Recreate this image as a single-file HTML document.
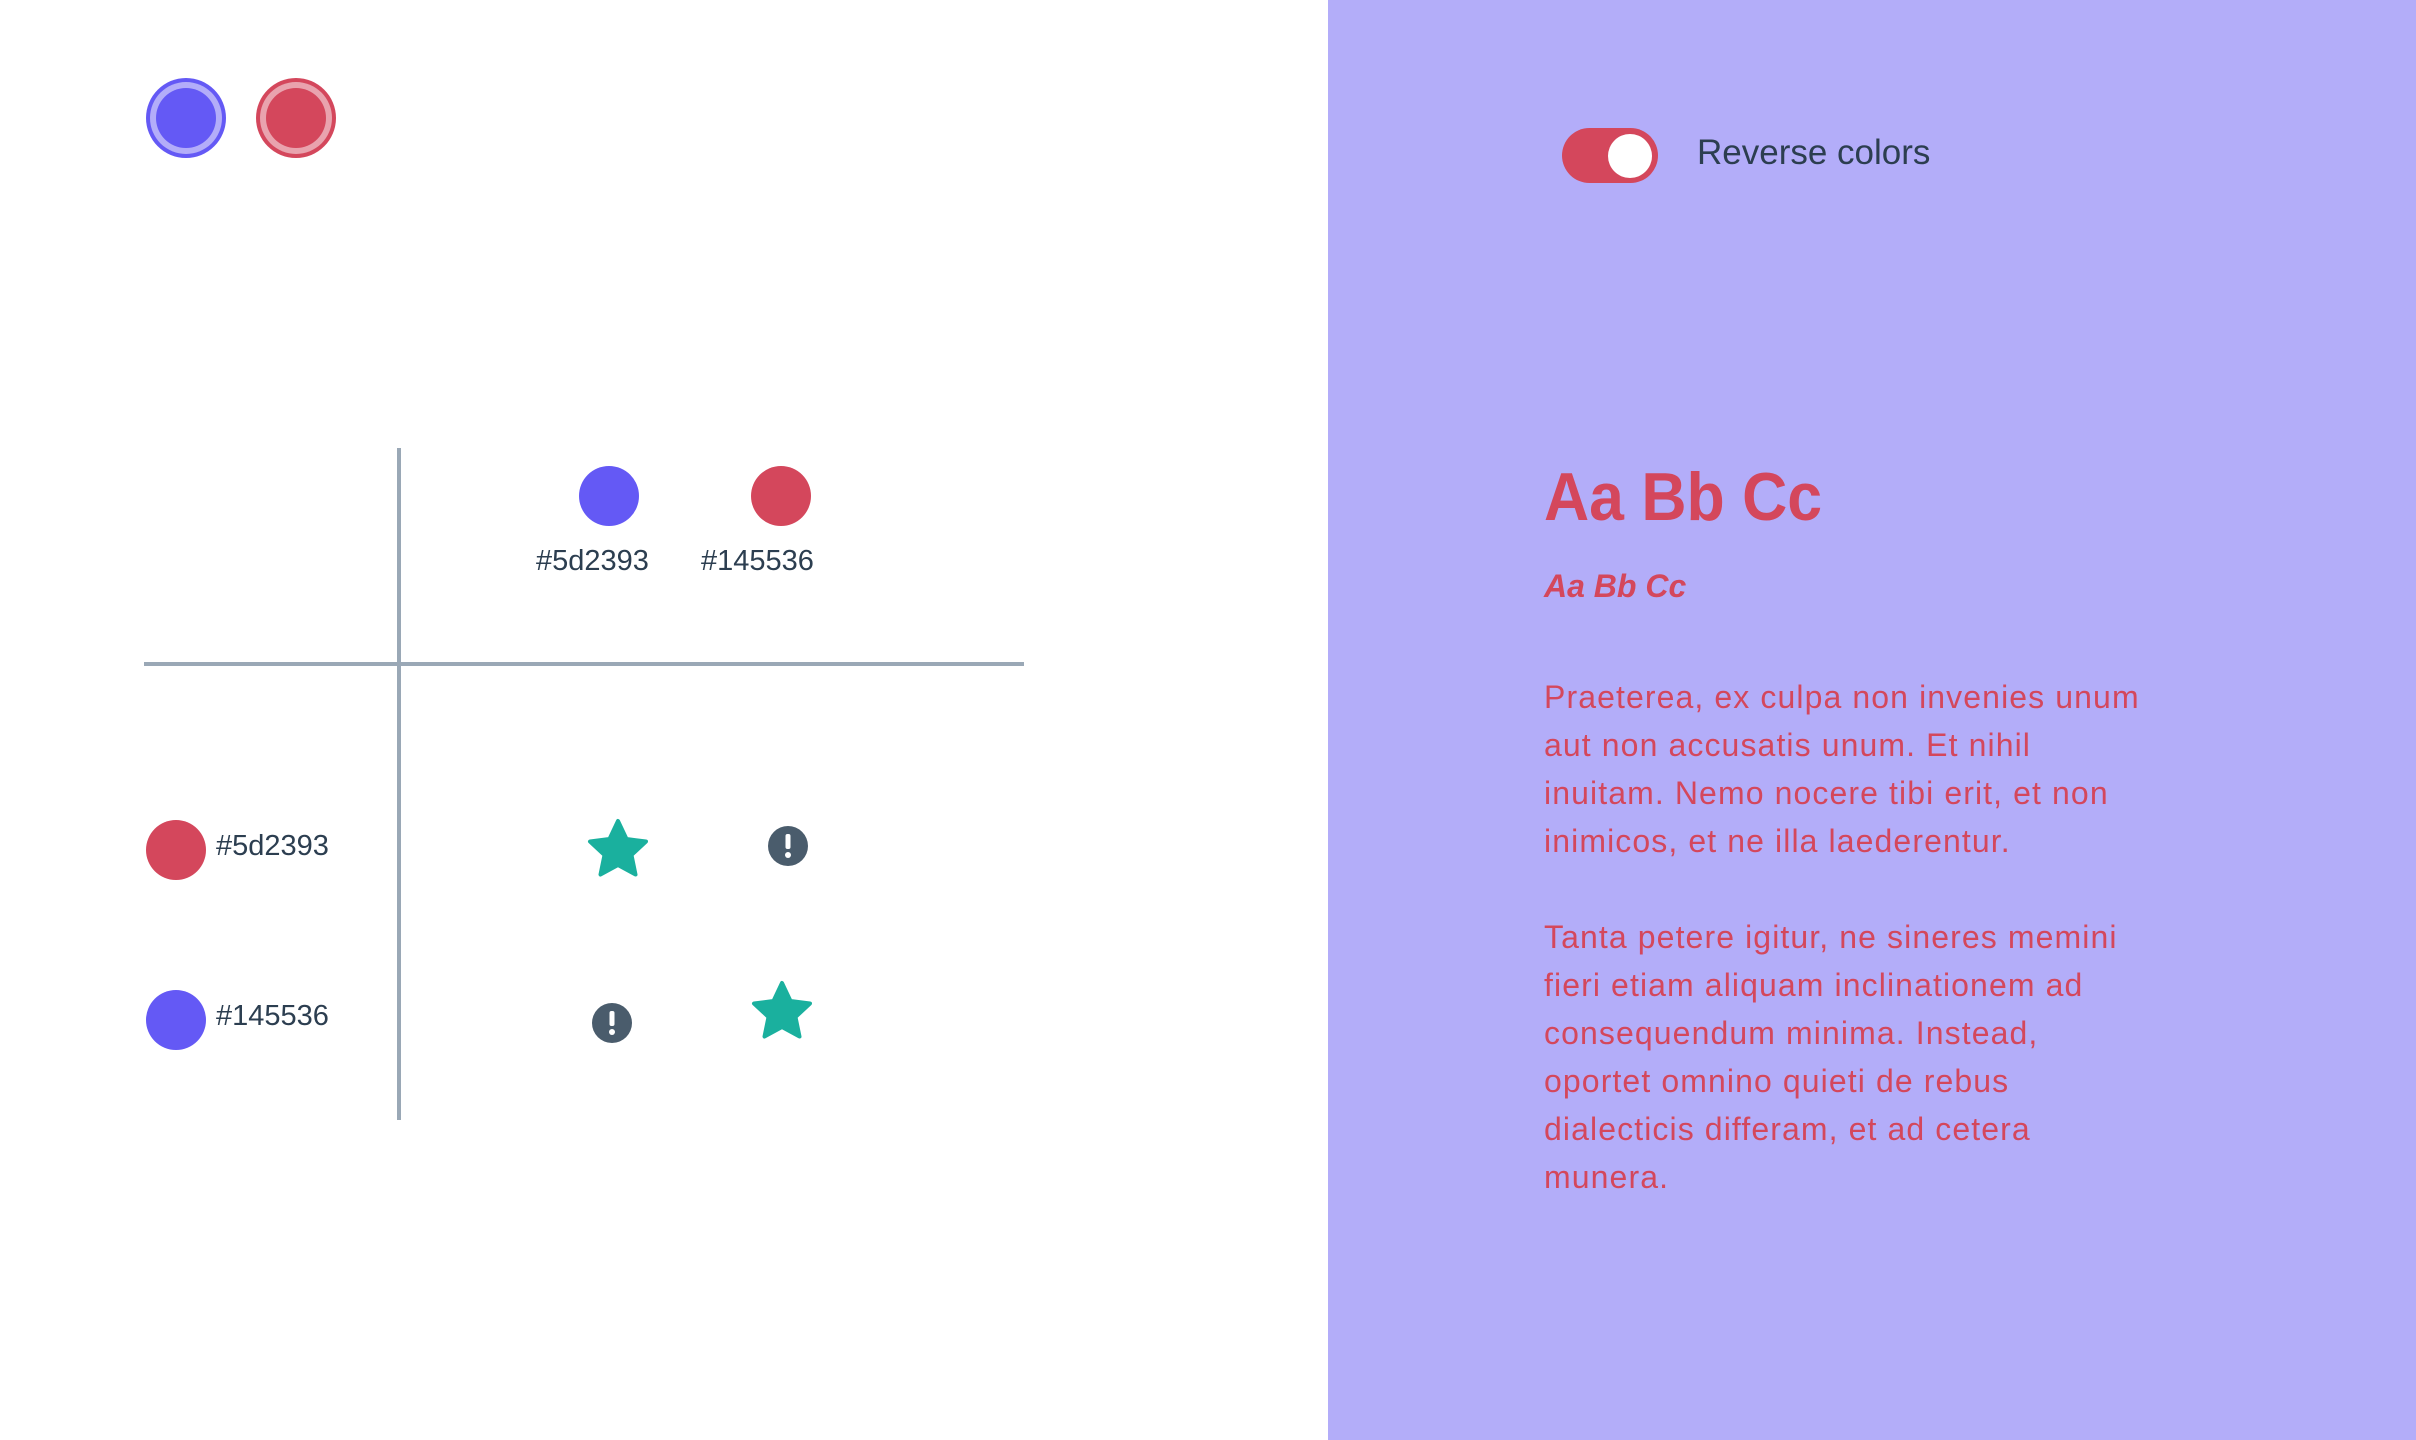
<!DOCTYPE html>
<html><head><meta charset="utf-8"><style>
*{margin:0;padding:0;box-sizing:border-box}
body{width:2416px;height:1440px;position:relative;background:#fff;font-family:"Liberation Sans",sans-serif;overflow:hidden}
.a{position:absolute}
.panel{left:1328px;top:0;width:1088px;height:1440px;background:#b3adf9}
.dot{position:absolute;border-radius:50%;width:60px;height:60px}
.blue{background:#6459f5}.red{background:#d4475c}
.lbl{position:absolute;font-size:29px;line-height:29px;color:#2c3e50;white-space:nowrap;letter-spacing:0px}
.p{position:absolute;left:1544px;font-size:32px;line-height:48px;color:#d4475c;white-space:nowrap;letter-spacing:1.1px}
</style></head><body>
<div class="a" style="left:146px;top:78px;width:80px;height:80px;border-radius:50%;background:#6459f5"></div>
<div class="a" style="left:150px;top:82px;width:72px;height:72px;border-radius:50%;background:#b3adf9"></div>
<div class="a" style="left:156px;top:88px;width:60px;height:60px;border-radius:50%;background:#6459f5"></div>
<div class="a" style="left:256px;top:78px;width:80px;height:80px;border-radius:50%;background:#d4475c"></div>
<div class="a" style="left:260px;top:82px;width:72px;height:72px;border-radius:50%;background:#e9a3ae"></div>
<div class="a" style="left:266px;top:88px;width:60px;height:60px;border-radius:50%;background:#d4475c"></div>

<div class="a" style="left:397px;top:448px;width:4px;height:672px;background:#9aa8b6"></div>
<div class="a" style="left:144px;top:662px;width:880px;height:4px;background:#9aa8b6"></div>

<div class="dot blue" style="left:579px;top:466px"></div>
<div class="dot red" style="left:751px;top:466px"></div>
<div class="lbl" style="left:536px;top:547px">#5d2393</div>
<div class="lbl" style="left:701px;top:547px">#145536</div>

<div class="dot red" style="left:146px;top:820px"></div>
<div class="lbl" style="left:216px;top:832px">#5d2393</div>
<div class="dot blue" style="left:146px;top:990px"></div>
<div class="lbl" style="left:216px;top:1002px">#145536</div>

<svg class="a" style="left:584px;top:816px" width="68" height="68" viewBox="0 0 68 68"><polygon points="34,5 42.5,23 62,25.5 47.5,39 51.5,58.5 34,49 16.5,58.5 20.5,39 6,25.5 25.5,23" fill="#1ab09e" stroke="#1ab09e" stroke-width="4" stroke-linejoin="round"/></svg>
<svg class="a" style="left:748px;top:978px" width="68" height="68" viewBox="0 0 68 68"><polygon points="34,5 42.5,23 62,25.5 47.5,39 51.5,58.5 34,49 16.5,58.5 20.5,39 6,25.5 25.5,23" fill="#1ab09e" stroke="#1ab09e" stroke-width="4" stroke-linejoin="round"/></svg>
<svg class="a" style="left:768px;top:826px" width="40" height="40" viewBox="0 0 40 40"><circle cx="20" cy="20" r="20" fill="#4a5c6c"/><rect x="17.5" y="8" width="5" height="15" rx="2" fill="#fff"/><circle cx="20" cy="29" r="3" fill="#fff"/></svg>
<svg class="a" style="left:592px;top:1003px" width="40" height="40" viewBox="0 0 40 40"><circle cx="20" cy="20" r="20" fill="#4a5c6c"/><rect x="17.5" y="8" width="5" height="15" rx="2" fill="#fff"/><circle cx="20" cy="29" r="3" fill="#fff"/></svg>

<div class="a panel"></div>
<div class="a" style="left:1562px;top:128px;width:96px;height:55px;border-radius:28px;background:#d4475c"></div>
<div class="a" style="left:1608px;top:134px;width:44px;height:44px;border-radius:50%;background:#fff"></div>
<div class="a" style="left:1697px;top:135px;font-size:35px;line-height:35px;color:#2c3e50;white-space:nowrap">Reverse colors</div>

<div class="a" style="left:1544px;top:463px;font-size:68px;line-height:68px;font-weight:bold;color:#d4475c;white-space:nowrap;transform:scaleX(0.92);transform-origin:left top">Aa Bb Cc</div>
<div class="a" style="left:1544px;top:570px;font-size:32px;line-height:32px;font-weight:bold;font-style:italic;color:#d4475c;white-space:nowrap">Aa Bb Cc</div>

<div class="p" style="top:673px">Praeterea, ex culpa non invenies unum<br>aut non accusatis unum. Et nihil<br>inuitam. Nemo nocere tibi erit, et non<br>inimicos, et ne illa laederentur.</div>
<div class="p" style="top:913px">Tanta petere igitur, ne sineres memini<br>fieri etiam aliquam inclinationem ad<br>consequendum minima. Instead,<br>oportet omnino quieti de rebus<br>dialecticis differam, et ad cetera<br>munera.</div>
</body></html>
